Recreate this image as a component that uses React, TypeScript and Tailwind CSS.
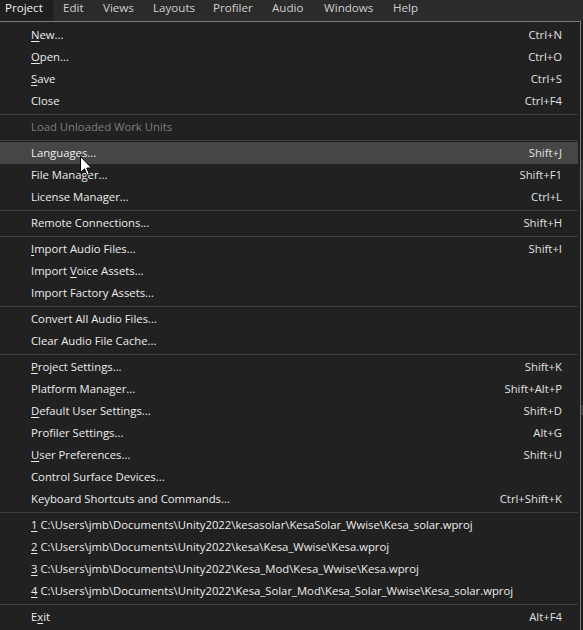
import React from 'react'

type Item =
  | { sep: true }
  | { label: React.ReactNode; shortcut?: string; disabled?: boolean; active?: boolean }

const u = (c: string) => <span className="underline underline-offset-[2px] decoration-1">{c}</span>

const items: Item[] = [
  { label: <>{u('N')}ew...</>, shortcut: 'Ctrl+N' },
  { label: <>{u('O')}pen...</>, shortcut: 'Ctrl+O' },
  { label: <>{u('S')}ave</>, shortcut: 'Ctrl+S' },
  { label: 'Close', shortcut: 'Ctrl+F4' },
  { sep: true },
  { label: 'Load Unloaded Work Units', disabled: true },
  { sep: true },
  { label: 'Languages...', shortcut: 'Shift+J', active: true },
  { label: 'File Manager...', shortcut: 'Shift+F1' },
  { label: 'License Manager...', shortcut: 'Ctrl+L' },
  { sep: true },
  { label: 'Remote Connections...', shortcut: 'Shift+H' },
  { sep: true },
  { label: <>{u('I')}mport Audio Files...</>, shortcut: 'Shift+I' },
  { label: <>Import {u('V')}oice Assets...</> },
  { label: 'Import Factory Assets...' },
  { sep: true },
  { label: 'Convert All Audio Files...' },
  { label: 'Clear Audio File Cache...' },
  { sep: true },
  { label: <>{u('P')}roject Settings...</>, shortcut: 'Shift+K' },
  { label: 'Platform Manager...', shortcut: 'Shift+Alt+P' },
  { label: <>{u('D')}efault User Settings...</>, shortcut: 'Shift+D' },
  { label: 'Profiler Settings...', shortcut: 'Alt+G' },
  { label: <>{u('U')}ser Preferences...</>, shortcut: 'Shift+U' },
  { label: 'Control Surface Devices...' },
  { label: 'Keyboard Shortcuts and Commands...', shortcut: 'Ctrl+Shift+K' },
  { sep: true },
  { label: <>{u('1')} C:\Users\jmb\Documents\Unity2022\kesasolar\KesaSolar_Wwise\Kesa_solar.wproj</> },
  { label: <>{u('2')} C:\Users\jmb\Documents\Unity2022\kesa\Kesa_Wwise\Kesa.wproj</> },
  { label: <>{u('3')} C:\Users\jmb\Documents\Unity2022\Kesa_Mod\Kesa_Wwise\Kesa.wproj</> },
  { label: <>{u('4')} C:\Users\jmb\Documents\Unity2022\Kesa_Solar_Mod\Kesa_Solar_Wwise\Kesa_solar.wproj</> },
  { sep: true },
  { label: <>E{u('x')}it</>, shortcut: 'Alt+F4' },
]

const bar = [
  { name: 'Project', cls: 'w-[53px] pl-[5px] bg-[#1f1f1f] text-[#f2f2f2]' },
  { name: 'Edit', cls: 'pl-[10px] w-[50px]' },
  { name: 'Views', cls: 'w-[50px]' },
  { name: 'Layouts', cls: 'w-[60px]' },
  { name: 'Profiler', cls: 'w-[59px]' },
  { name: 'Audio', cls: 'w-[52px]' },
  { name: 'Windows', cls: 'w-[69px]' },
  { name: 'Help', cls: 'w-[50px]' },
]

export default function App() {
  return (
    <div
      className="relative w-[583px] h-[630px] overflow-hidden bg-[#1c1c1c] text-[11.3px]"
      style={{ fontFamily: '"Open Sans", "Noto Sans", sans-serif' }}
    >
      <div className="flex h-[21px] bg-[#2b2b2b] text-[#cfcfcf] leading-[15px] text-[11.6px]">
        {bar.map(b => (
          <div key={b.name} className={`h-full ${b.cls}`}>
            {b.name}
          </div>
        ))}
      </div>

      <div className="w-[581px] h-[609px] bg-[#212121] border-t border-r border-[#7c7c7c] pt-[2px]">
        {items.map((it, i) =>
          'sep' in it ? (
            <div key={i} className="h-[4px] mr-[2px] flex items-center">
              <div className="h-px w-full bg-[#3f3f3f]" />
            </div>
          ) : (
            <div
              key={i}
              className={`h-[22px] mr-[2px] pl-[31px] pr-[16px] flex items-center justify-between whitespace-nowrap ${
                it.active ? 'bg-[#464646]' : ''
              } ${it.disabled ? 'text-[#7e7e7e]' : 'text-[#ececec]'}`}
            >
              <span>{it.label}</span>
              {it.shortcut && <span className="text-[#e0e0e0]">{it.shortcut}</span>}
            </div>
          )
        )}
      </div>

      <div className="absolute right-0 top-[160px] w-[2px] h-[40px] bg-[#2a2a2a]" />
      <div className="absolute right-0 top-[405px] w-[2px] h-[10px] bg-[#3a3a3a]" />

      <svg className="absolute left-[80px] top-[156px]" width="13" height="21" viewBox="0 0 13 21">
        <path d="M0.5 0.5 L0.5 16.5 L4.5 12.8 L7.2 19.2 L9.4 18.3 L6.8 12 L11.5 12 Z" fill="#fff" stroke="#000" strokeWidth="1" />
      </svg>
    </div>
  )
}
